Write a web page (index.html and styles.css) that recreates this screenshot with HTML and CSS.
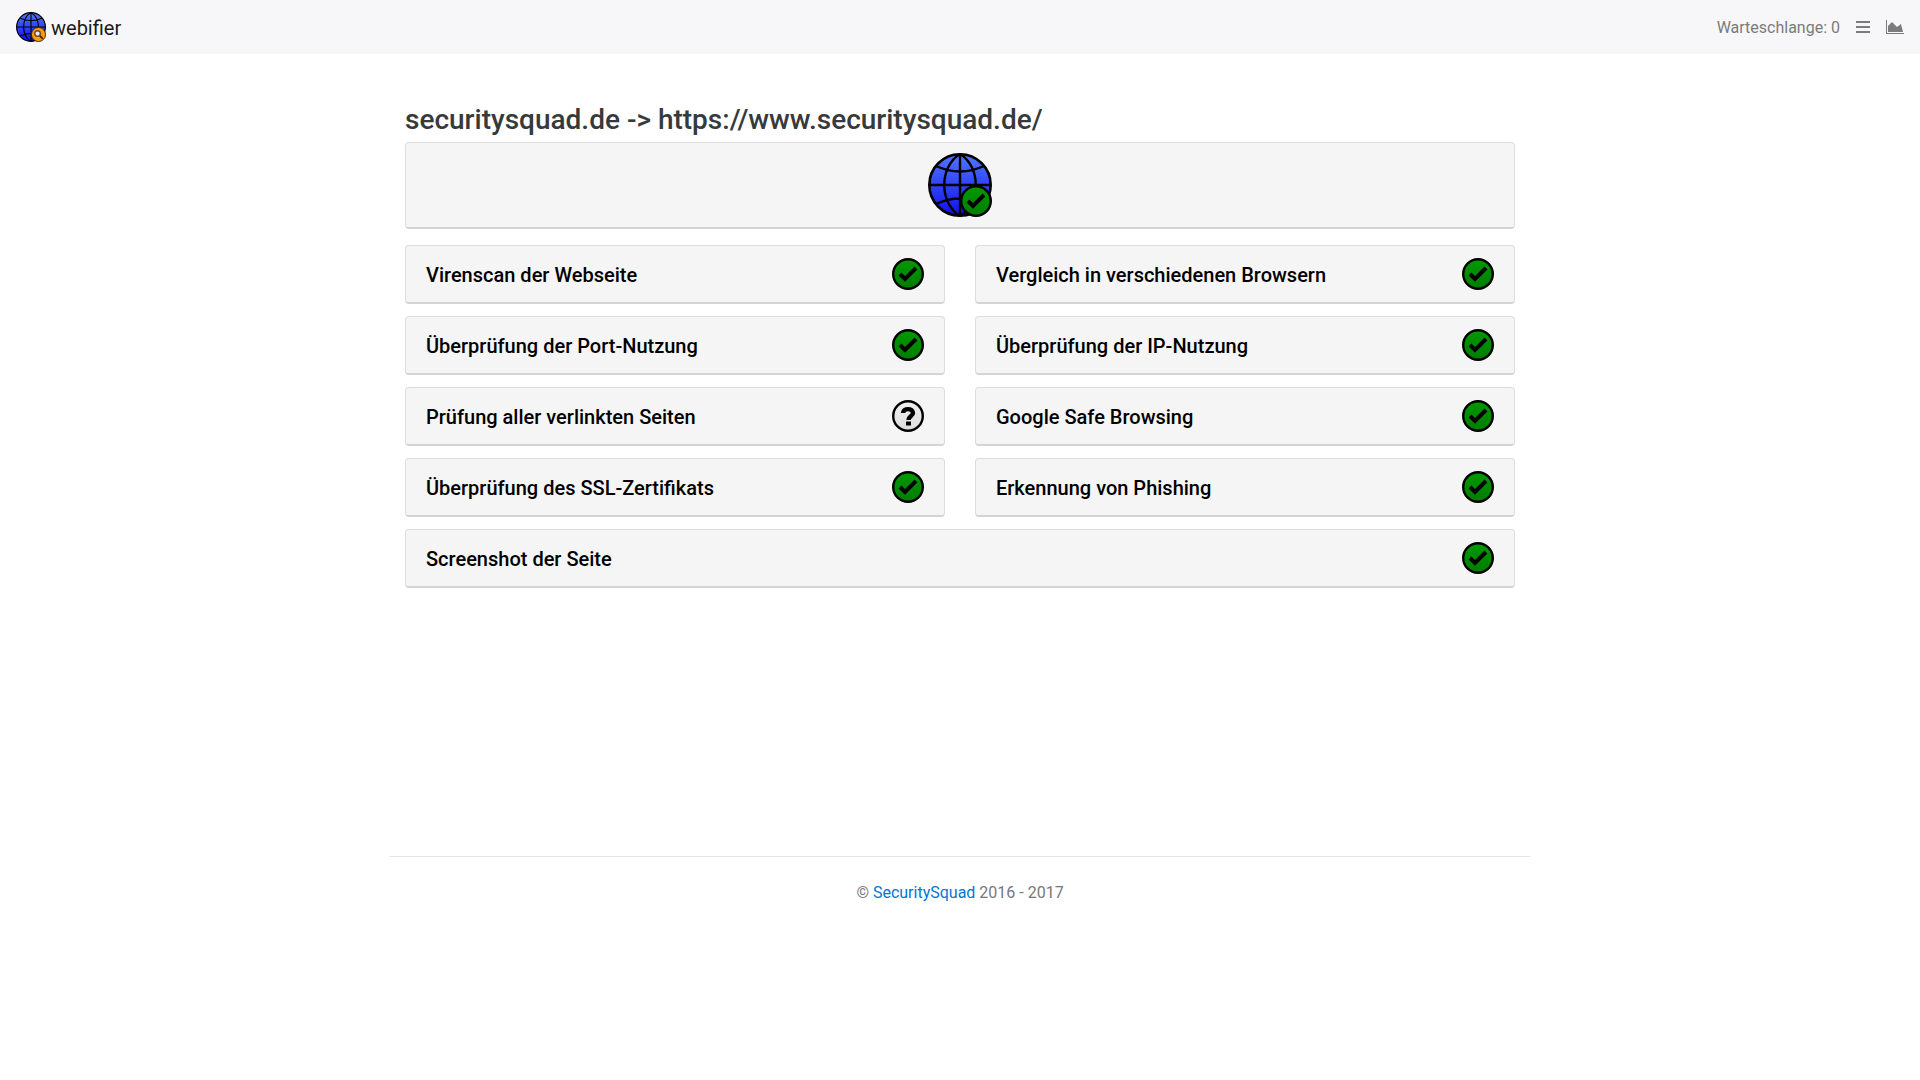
FILE: index.html
```html
<!DOCTYPE html>
<html lang="de">
<head>
<meta charset="utf-8">
<meta name="viewport" content="width=device-width, initial-scale=1">
<title>webifier</title>
<link rel="stylesheet" href="styles.css">
</head>
<body>
<svg class="sprite" aria-hidden="true">
  <defs>
    <linearGradient id="blue" x1="0" y1="0" x2="0" y2="1"><stop offset="0" stop-color="#5078ff"/><stop offset="1" stop-color="#0f0ff0"/></linearGradient>
    <linearGradient id="green" x1="0" y1="0" x2="0" y2="1"><stop offset="0" stop-color="#009a00"/><stop offset="1" stop-color="#007c00"/></linearGradient>
    <linearGradient id="grey" x1="0" y1="0" x2="0" y2="1"><stop offset="0" stop-color="#f0f0f0"/><stop offset="1" stop-color="#dcdcdc"/></linearGradient>
    <symbol id="globe" viewBox="0 0 64 64">
      <circle cx="32" cy="32" r="30.700" fill="url(#blue)" stroke="#000" stroke-width="2.600"/>
      <path d="M32 1V63M1 32H63M8 13Q32 24 56 13M8 51Q32 40 56 51M32 1C11 14 11 50 32 63M32 1C53 14 53 50 32 63" fill="none" stroke="#000" stroke-width="2.400"/>
    </symbol>
    <symbol id="check" viewBox="0 0 32 32">
      <circle cx="16" cy="16" r="14.800" fill="url(#green)" stroke="#000" stroke-width="2.400"/>
      <path d="M8 16L13 21L24 10" fill="none" stroke="#000" stroke-width="4"/>
    </symbol>
    <symbol id="question" viewBox="0 0 32 32">
      <circle cx="16" cy="16" r="14.800" fill="url(#grey)" stroke="#000" stroke-width="2.400"/>
      <path d="M11 13C11 7.800 21 7.800 21 13C21 16 16.500 16 16.500 20" fill="none" stroke="#000" stroke-width="4.400"/>
      <path d="M14 21.500h5v4h-5z"/>
    </symbol>
  </defs>
</svg>
<header class="navbar">
  <a class="brand" href="#">
    <svg class="brand-logo" viewBox="0 0 64 64" aria-hidden="true">
      <use href="#globe"/>
      <circle cx="48" cy="48" r="15" fill="#ff9c08" stroke="#3a2400" stroke-width="2"/>
      <path d="M50 50L57 57" stroke="#4a2c00" stroke-width="4"/>
      <circle cx="46" cy="46" r="6" fill="#e8e8e8" stroke="#6a4a20" stroke-width="3"/>
    </svg>
    <span>webifier</span>
  </a>
  <nav class="nav">
    <span>Warteschlange: 0</span>
    <a href="#" aria-label="Liste"><svg class="bars" viewBox="0 0 14 12" aria-hidden="true"><path d="M0 0h14v2H0zM0 5h14v2H0zM0 10h14v2H0z"/></svg></a>
    <a href="#" aria-label="Statistik"><svg class="chart" viewBox="0 0 18 14" aria-hidden="true"><path d="M0 0h1v13h17v1H0zM2 12V6l4-4 4 4 1 1 4-3 2 8z"/></svg></a>
  </nav>
</header>
<main class="container">
  <h1 class="title">securitysquad.de -&gt; https://www.securitysquad.de/</h1>
  <section class="card summary">
    <svg class="summary-icon" viewBox="0 0 64 64" role="img" aria-label="Unbedenklich"><use href="#globe"/><use href="#check" x="32" y="32" width="32" height="32"/></svg>
  </section>
  <div class="results">
    <section class="card"><h2>Virenscan der Webseite</h2><svg class="state"><use href="#check"/></svg></section>
    <section class="card"><h2>Vergleich in verschiedenen Browsern</h2><svg class="state"><use href="#check"/></svg></section>
    <section class="card"><h2>Überprüfung der Port-Nutzung</h2><svg class="state"><use href="#check"/></svg></section>
    <section class="card"><h2>Überprüfung der IP-Nutzung</h2><svg class="state"><use href="#check"/></svg></section>
    <section class="card"><h2>Prüfung aller verlinkten Seiten</h2><svg class="state"><use href="#question"/></svg></section>
    <section class="card"><h2>Google Safe Browsing</h2><svg class="state"><use href="#check"/></svg></section>
    <section class="card"><h2>Überprüfung des SSL-Zertifikats</h2><svg class="state"><use href="#check"/></svg></section>
    <section class="card"><h2>Erkennung von Phishing</h2><svg class="state"><use href="#check"/></svg></section>
    <section class="card wide"><h2>Screenshot der Seite</h2><svg class="state"><use href="#check"/></svg></section>
  </div>
</main>
<footer class="footer">© <a href="#">SecuritySquad</a> 2016 - 2017</footer>
</body>
</html>
```
FILE: styles.css
```css
* { box-sizing: border-box; }
body { margin: 0; background: #fff; color: #373a3c; font: 16px/24px Roboto, sans-serif; }
a { color: #0275d8; text-decoration: none; }
svg { display: block; }
.sprite { position: absolute; width: 0; height: 0; }
.navbar { display: flex; align-items: center; justify-content: space-between; padding: 12px 16px; background: #f7f7f9; }
.brand { display: flex; align-items: center; gap: 5px; color: #1a1a1a; font-size: 20px; line-height: 28px; }
.brand-logo { width: 30px; height: 30px; }
.brand span, .nav span { padding-top: 2px; }
.nav { display: flex; align-items: center; gap: 16px; color: #7b7b7b; }
.nav a { color: inherit; }
.nav svg { fill: currentColor; }
.bars { width: 14px; height: 12px; }
.chart { width: 18px; height: 14px; }
.container { max-width: 1140px; margin: 0 auto; padding: 50px 15px 268px; }
.title { margin: 0 0 6px; font-size: 28px; line-height: 32px; font-weight: 500; }
.card { display: flex; align-items: center; justify-content: space-between; padding: 12px 20px; background: #f5f5f5; border: 1px solid #ddd; border-bottom: 2px solid #d4d4d4; border-radius: 4px; }
.summary { justify-content: center; padding: 10px 20px; }
.summary-icon { width: 64px; height: 64px; }
.results { display: grid; grid-template-columns: 1fr 1fr; gap: 12px 30px; margin-top: 16px; }
.wide { grid-column: 1 / -1; }
.card h2 { margin: 0; padding-top: 2px; color: #000; font-size: 20px; line-height: 30px; font-weight: 500; }
.state { width: 32px; height: 32px; }
.footer { max-width: 1140px; margin: 0 auto; padding: 24px 0; border-top: 1px solid #e5e5e5; color: #777; text-align: center; }
```
